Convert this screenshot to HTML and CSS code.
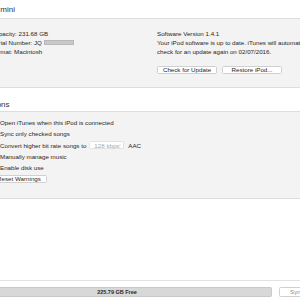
FILE: index.html
```html
<!DOCTYPE html>
<html lang="en">
<head>
    <meta charset="UTF-8">
    <meta name="viewport" content="width=device-width, initial-scale=1.0">
    <title>iPod mini - Summary</title>
    <link rel="stylesheet" href="styles.css">
</head>
<body>
    <div class="page">
        <div class="device-title">iPod mini</div>

        <div class="summary">
            <div class="info">
                <div>Capacity: 231.68 GB</div>
                <div>Serial Number: JQ<span class="redacted"></span></div>
                <div>Format: Macintosh</div>
            </div>
            <div class="software">
                <div>Software Version 1.4.1</div>
                <div>Your iPod software is up to date. iTunes will automatically</div>
                <div>check for an update again on 02/07/2016.</div>
                <div class="actions">
                    <button class="btn">Check for Update</button>
                    <button class="btn">Restore iPod...</button>
                </div>
            </div>
        </div>

        <div class="section-title">Options</div>

        <div class="options">
            <label class="option"><span class="check"></span>Open iTunes when this iPod is connected</label>
            <label class="option"><span class="check"></span>Sync only checked songs</label>
            <label class="option"><span class="check"></span>Convert higher bit rate songs to
                <span class="popup">128 kbps
                    <svg width="4" height="6" viewBox="0 0 4 6"><path d="M0.5 2.2L2 0.8L3.5 2.2M0.5 3.8L2 5.2L3.5 3.8" fill="none" stroke="#b0b0b0" stroke-width="0.7"/></svg>
                </span>
                AAC
            </label>
            <label class="option"><span class="check"></span>Manually manage music</label>
            <label class="option"><span class="check"></span>Enable disk use</label>
            <div class="option">
                <button class="btn btn-reset">Reset Warnings</button>
            </div>
        </div>

        <div class="spacer"></div>

        <div class="footer">
            <div class="storage">225.79 GB Free</div>
            <button class="btn btn-sync">Sync</button>
        </div>
    </div>
</body>
</html>
```

FILE: styles.css
```css
body {
    margin: 0;
    background-color: #fff;
    color: #262626;
    font-family: 'Liberation Sans', Arial, sans-serif;
    font-size: 6.2px;
    overflow: hidden;
}
.page {
    margin-left: -27px;
    width: 360px;
    height: 300px;
    display: flex;
    flex-direction: column;
}
.device-title {
    height: 18px;
    padding-left: 9px;
    font-size: 8px;
    line-height: 8px;
    padding-top: 6px;
    box-sizing: border-box;
    color: #333;
}
.summary {
    height: 70px;
    box-sizing: border-box;
    background-color: #f3f3f3;
    border-top: 1px solid #dedede;
    border-bottom: 1px solid #dedede;
    padding: 11px 0 0 18px;
    display: flex;
    line-height: 8.8px;
}
.info {
    width: 166px;
}
.redacted {
    display: inline-block;
    width: 28px;
    height: 3px;
    margin-left: 2px;
    background-color: #c8c8c8;
    border: 1px solid #b8b8b8;
    vertical-align: 0;
}
.software {
    flex: 1;
    white-space: nowrap;
}
.actions {
    display: flex;
    gap: 5px;
    margin-top: 10px;
}
.btn {
    background-color: #fff;
    color: #262626;
    border: 1px solid #d0d0d0;
    border-radius: 1.5px;
    font-family: 'Liberation Sans', Arial, sans-serif;
    font-size: 6.2px;
    height: 8px;
    width: 60px;
    padding: 0;
    line-height: 6px;
}
.section-title {
    height: 23px;
    box-sizing: border-box;
    padding: 13px 0 0 9px;
    font-size: 8px;
    line-height: 8px;
    color: #333;
}
.options {
    height: 88px;
    box-sizing: border-box;
    background-color: #f3f3f3;
    border-top: 1px solid #dedede;
    border-bottom: 1px solid #dedede;
    padding: 5px 0 0 18px;
}
.option {
    display: flex;
    align-items: center;
    height: 11.3px;
    white-space: nowrap;
}
.check {
    width: 6px;
    height: 6px;
    margin-right: 3px;
    background-color: #fff;
    border: 1px solid #c8c8c8;
    border-radius: 1px;
    box-sizing: border-box;
}
.popup {
    display: inline-flex;
    align-items: center;
    justify-content: space-between;
    box-sizing: border-box;
    width: 35px;
    height: 8px;
    margin: 0 4px 0 3px;
    padding: 0 2px 0 4px;
    background-color: #fff;
    border: 1px solid #e2e2e2;
    border-radius: 1.5px;
    color: #a8a8a8;
}
.btn-reset {
    width: 56px;
}
.spacer {
    height: 81px;
    border-bottom: 1px solid #e2e2e2;
}
.footer {
    display: flex;
    align-items: flex-start;
    padding-top: 6px;
    gap: 7px;
}
.storage {
    width: 299px;
    flex-shrink: 0;
    height: 10px;
    box-sizing: border-box;
    padding-right: 10px;
    background-color: #d8d8d8;
    border: 1px solid #c9c9c9;
    border-left: none;
    border-radius: 0 2px 2px 0;
    display: flex;
    align-items: center;
    justify-content: center;
    font-size: 5.5px;
    font-weight: bold;
    color: #2a2a2a;
}
.btn-sync {
    height: 10px;
    width: 36px;
    flex-shrink: 0;
    color: #8a8a8a;
}
```
